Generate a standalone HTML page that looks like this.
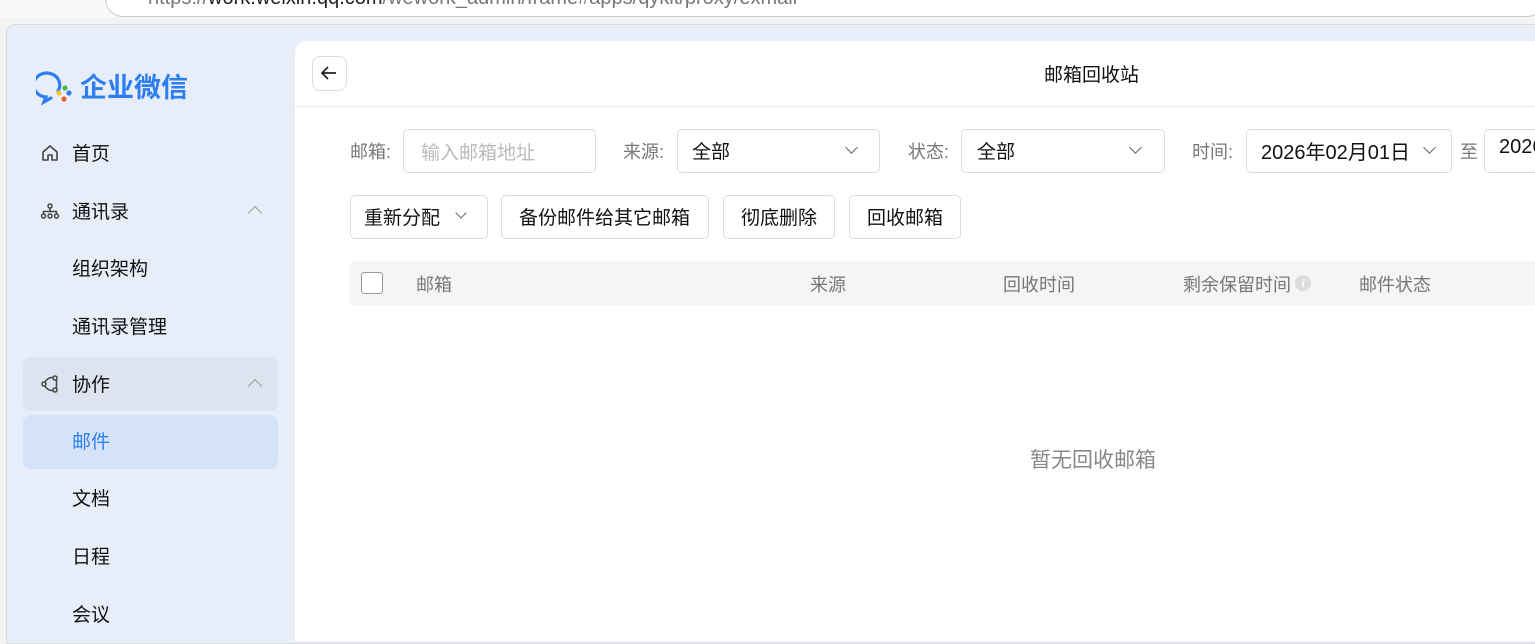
<!DOCTYPE html>
<html><head><meta charset="utf-8"><style>
*{margin:0;padding:0;box-sizing:border-box}
body{width:1535px;height:635px;overflow:hidden;background:#f3f3f3;font-family:"Liberation Sans","Noto Sans CJK SC",sans-serif;position:relative}
.a{position:absolute;white-space:nowrap}
.top{left:0;top:0;width:1535px;height:18px;background:#f9f9f9}
.url{left:105px;top:-20px;width:1440px;height:37px;border:1px solid #ccc;border-radius:18px;background:#fff;font-size:20px;color:#777;padding:0 0 0 42px;line-height:34px}
.win{left:6px;top:24px;width:1540px;height:620px;background:#e8eef9;border-top-left-radius:10px;border:1px solid #d9d9d9}
.nav{font-size:19px;color:#111}
.main{left:295px;top:41px;width:1250px;height:600px;background:#fff;border-top-left-radius:12px}
.box{border:1px solid #dcdcdc;border-radius:5px;background:#fff}
.lbl{font-size:18px;color:#777}
.val{font-size:19px;color:#111}
.th{font-size:18px;color:#777;top:271px}
.chev{width:9px;height:9px;border-right:1.6px solid #666;border-bottom:1.6px solid #666;transform:rotate(45deg)}
.up{width:10px;height:10px;border-left:1.6px solid #999;border-top:1.6px solid #999;transform:rotate(45deg)}
</style></head><body>
<div class="a top"></div>
<div class="a url">https://<span style="color:#222">work.weixin.qq.com</span>/wework_admin/frame#apps/qykit/proxy/exmail</div>
<div class="a win"></div>
<svg class="a" style="left:36px;top:70px" width="40" height="36" viewBox="0 0 40 36"><path d="M22 21 A13 12 0 1 0 10 27 L8 32 L15 28" fill="none" stroke="#2d7ff0" stroke-width="3.2" stroke-linecap="round"/><circle cx="29" cy="18" r="2.6" fill="#4cb848"/><circle cx="23" cy="23" r="2.6" fill="#f7c42d"/><circle cx="33" cy="23" r="2.6" fill="#2d7ff0"/><circle cx="28" cy="29" r="2.6" fill="#ee5a2c"/></svg>
<div class="a" style="left:80px;top:66px;font-size:27px;font-weight:bold;color:#2d7ff0">企业微信</div>
<svg class="a" style="left:40px;top:143px" width="20" height="20" viewBox="0 0 20 20"><path d="M3 9 L10 3 L17 9 V17 H12 V12 H8 V17 H3 Z" fill="none" stroke="#444" stroke-width="1.6" stroke-linejoin="round"/></svg>
<div class="a nav" style="left:72px;top:139px">首页</div>
<svg class="a" style="left:40px;top:201px" width="20" height="20" viewBox="0 0 20 20" fill="none" stroke="#444" stroke-width="1.5"><circle cx="10" cy="5" r="2"/><circle cx="3.5" cy="15" r="2"/><circle cx="10" cy="15" r="2"/><circle cx="16.5" cy="15" r="2"/><path d="M10 7v3M3.5 13v-2.5h13V13"/></svg>
<div class="a nav" style="left:72px;top:197px">通讯录</div>
<div class="a up" style="left:250px;top:208px"></div>
<div class="a nav" style="left:72px;top:254px">组织架构</div>
<div class="a nav" style="left:72px;top:312px">通讯录管理</div>
<div class="a" style="left:23px;top:357px;width:255px;height:54px;background:#dde4ef;border-radius:8px"></div>
<svg class="a" style="left:40px;top:374px" width="20" height="20" viewBox="0 0 20 20" fill="none" stroke="#444" stroke-width="1.5"><circle cx="4" cy="10" r="2"/><circle cx="15" cy="4" r="2"/><circle cx="15" cy="16" r="2"/><path d="M5 8 Q8 3 13 3.5M5 12 Q8 17 13 16.5M16.5 6 V14"/></svg>
<div class="a nav" style="left:72px;top:370px">协作</div>
<div class="a up" style="left:250px;top:381px"></div>
<div class="a" style="left:23px;top:415px;width:255px;height:54px;background:#d4e3f8;border-radius:8px"></div>
<div class="a nav" style="left:72px;top:427px;color:#2d7ff0">邮件</div>
<div class="a nav" style="left:72px;top:484px">文档</div>
<div class="a nav" style="left:72px;top:542px">日程</div>
<div class="a nav" style="left:72px;top:600px">会议</div>
<div class="a main"></div>
<div class="a box" style="left:312px;top:56px;width:35px;height:35px;border-radius:8px"></div>
<svg class="a" style="left:319px;top:63px" width="20" height="20" viewBox="0 0 20 20" fill="none" stroke="#222" stroke-width="1.7"><path d="M17 10H3M9 4 L3 10 L9 16"/></svg>
<div class="a" style="left:1044px;top:60px;font-size:19px;color:#111">邮箱回收站</div>
<div class="a" style="left:295px;top:106px;width:1250px;height:1px;background:#eaeaea"></div>
<div class="a lbl" style="left:350px;top:138px">邮箱:</div>
<div class="a box" style="left:403px;top:129px;width:193px;height:44px"></div>
<div class="a" style="left:421px;top:138px;font-size:19px;color:#bbb">输入邮箱地址</div>
<div class="a lbl" style="left:623px;top:138px">来源:</div>
<div class="a box" style="left:677px;top:129px;width:203px;height:44px"></div>
<div class="a val" style="left:692px;top:137px">全部</div>
<div class="a chev" style="left:847px;top:143px"></div>
<div class="a lbl" style="left:908px;top:138px">状态:</div>
<div class="a box" style="left:961px;top:129px;width:204px;height:44px"></div>
<div class="a val" style="left:977px;top:137px">全部</div>
<div class="a chev" style="left:1131px;top:143px"></div>
<div class="a lbl" style="left:1192px;top:138px">时间:</div>
<div class="a box" style="left:1246px;top:129px;width:206px;height:44px"></div>
<div class="a val" style="left:1261px;top:136px;font-size:20px">2026年02月01日</div>
<div class="a chev" style="left:1425px;top:143px"></div>
<div class="a lbl" style="left:1460px;top:138px">至</div>
<div class="a box" style="left:1484px;top:129px;width:100px;height:44px"></div>
<div class="a val" style="left:1499px;top:136px;font-size:20px">2026</div>
<div class="a box" style="left:350px;top:195px;width:138px;height:44px"></div>
<div class="a val" style="left:364px;top:203px">重新分配</div>
<div class="a chev" style="left:457px;top:209px;width:8px;height:8px"></div>
<div class="a box" style="left:501px;top:195px;width:208px;height:44px"></div>
<div class="a val" style="left:519px;top:203px">备份邮件给其它邮箱</div>
<div class="a box" style="left:723px;top:195px;width:112px;height:44px"></div>
<div class="a val" style="left:741px;top:203px">彻底删除</div>
<div class="a box" style="left:849px;top:195px;width:112px;height:44px"></div>
<div class="a val" style="left:867px;top:203px">回收邮箱</div>
<div class="a" style="left:350px;top:261px;width:1200px;height:44px;background:#f5f5f5;border-radius:4px"></div>
<div class="a" style="left:361px;top:272px;width:22px;height:22px;border:1.5px solid #999;border-radius:3px;background:#fff"></div>
<div class="a th" style="left:416px">邮箱</div>
<div class="a th" style="left:810px">来源</div>
<div class="a th" style="left:1003px">回收时间</div>
<div class="a th" style="left:1183px">剩余保留时间</div>
<div class="a" style="left:1295px;top:275px;width:16px;height:16px;border-radius:50%;background:#ddd;color:#fff;font-size:12px;font-style:italic;font-weight:bold;text-align:center;line-height:16px;font-family:'Liberation Serif',serif">i</div>
<div class="a th" style="left:1359px">邮件状态</div>
<div class="a" style="left:1030px;top:444px;font-size:21px;color:#888">暂无回收邮箱</div>
</body></html>
